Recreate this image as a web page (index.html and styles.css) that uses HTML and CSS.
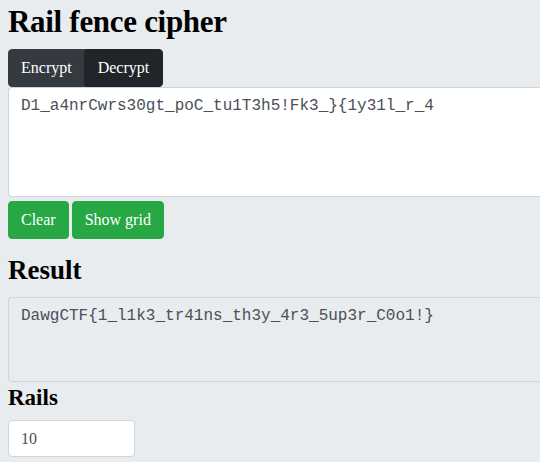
FILE: index.html
```html
<!DOCTYPE html>
<html lang="en">
<head>
<meta charset="utf-8">
<title>Rail fence cipher</title>
<link rel="stylesheet" href="styles.css">
</head>
<body>
<main class="page">
  <h1 class="title">Rail fence cipher</h1>
  <div class="btn-group">
    <button class="btn btn-dark">Encrypt</button>
    <button class="btn btn-darker">Decrypt</button>
  </div>
  <textarea class="field field-input" spellcheck="false">D1_a4nrCwrs30gt_poC_tu1T3h5!Fk3_}{1y31l_r_4</textarea>
  <div class="actions">
    <button class="btn btn-green">Clear</button>
    <button class="btn btn-green">Show grid</button>
  </div>
  <h2 class="section">Result</h2>
  <textarea class="field field-result" readonly>DawgCTF{1_l1k3_tr41ns_th3y_4r3_5up3r_C0o1!}</textarea>
  <h3 class="label">Rails</h3>
  <input class="rails" type="text" value="10">
</main>
</body>
</html>
```

FILE: styles.css
```css
html, body {
  margin: 0;
  padding: 0;
  overflow: hidden;
  background: #e9ecef;
}

.page {
  padding: 3px 0 0 8px;
  font-family: "Liberation Serif", serif;
  color: #000;
}

.title {
  margin: 0 0 8px 0;
  font-size: 31px;
  letter-spacing: -0.3px;
  line-height: 38px;
  font-weight: bold;
}

.btn-group {
  display: flex;
  width: max-content;
}

.btn {
  font-family: "Liberation Serif", serif;
  font-size: 16px;
  line-height: 24px;
  padding: 6px 12px;
  border: 1px solid transparent;
  color: #fff;
  cursor: pointer;
  margin: 0;
}

.btn-dark {
  background: #343a40;
  border-color: #343a40;
  border-radius: 4px 0 0 4px;
  padding-right: 11px;
}

.btn-darker {
  background: #212529;
  border-color: #212529;
  border-radius: 0 4px 4px 0;
  padding: 6px 13px;
}

.btn-green {
  background: #28a745;
  border-color: #28a745;
  border-radius: 4px;
}

.btn-clear {
  padding: 6px 11px;
}

.field {
  display: block;
  box-sizing: border-box;
  width: 100%;
  margin: 0;
  padding: 6px 12px;
  font-family: "Liberation Mono", monospace;
  font-size: 16px;
  line-height: 24px;
  color: #495057;
  border: 1px solid #ced4da;
  border-right: none;
  border-radius: 4px 0 0 4px;
  resize: none;
}

.field-input {
  height: 110px;
  background: #fff;
}

.actions {
  display: flex;
  gap: 3px;
  margin-top: 4px;
}

.section {
  margin: 15px 0 11px 0;
  font-size: 27px;
  line-height: 32px;
  font-weight: bold;
}

.field-result {
  height: 85px;
  background: #e9ecef;
}

.label {
  margin: 2px 0 8px 0;
  font-size: 23px;
  line-height: 28px;
  font-weight: bold;
}

.rails {
  display: block;
  box-sizing: border-box;
  width: 127px;
  height: 37px;
  padding: 6px 12px;
  font-family: "Liberation Serif", serif;
  font-size: 16px;
  color: #495057;
  background: #fff;
  border: 1px solid #ced4da;
  border-radius: 4px;
}
```
